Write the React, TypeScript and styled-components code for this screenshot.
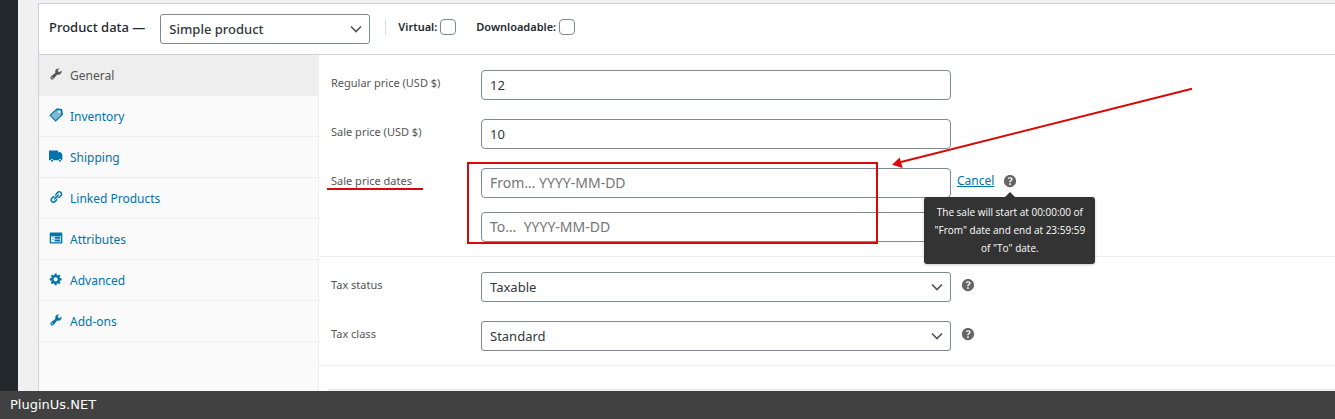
import React from 'react';
import styled, { createGlobalStyle } from 'styled-components';

const Global = createGlobalStyle`
  *, *::before, *::after { box-sizing: border-box; }
  html, body, #root { height: 100%; }
  body { margin: 0; overflow: hidden; background: #f0f0f1; font-family: 'Noto Sans', 'Open Sans', sans-serif; color: #23282d; }
  input, select, button { font-family: inherit; }
`;

const Page = styled.div`
  display: flex;
  flex-direction: column;
  height: 100vh;
`;

const Workspace = styled.div`
  flex: 1;
  min-height: 0;
  display: flex;
  overflow: hidden;
`;

const AdminMenu = styled.aside`
  flex: 0 0 18px;
  background: #23282d;
`;

const Main = styled.main`
  flex: 1;
  min-width: 0;
  display: flex;
  padding: 3px 0 0 20px;
`;

const MetaBox = styled.section`
  position: relative;
  flex: 1;
  min-width: 0;
  display: flex;
  flex-direction: column;
  background: #fff;
  border: solid #ccd0d4;
  border-width: 1px 0 0 1px;
`;

const Header = styled.header`
  display: flex;
  align-items: flex-start;
  padding: 10px;
  border-bottom: 1px solid #ccd0d4;
`;

const Title = styled.h2`
  margin: 0 15px 0 0;
  font-size: 13px;
  line-height: 26px;
  font-weight: 500;
  white-space: nowrap;
`;

const SelectWrap = styled.div<{ $width: number }>`
  position: relative;
  width: ${(p) => p.$width}px;
  flex: none;

  svg {
    position: absolute;
    right: 8px;
    top: 9px;
    pointer-events: none;
  }
`;

const Select = styled.select<{ $strong?: boolean }>`
  appearance: none;
  display: block;
  width: 100%;
  height: 30px;
  padding: 0 24px 0 8px;
  border: 1px solid #7e8993;
  border-radius: 3px;
  background: #fff;
  color: #32373c;
  font-size: 13px;
  font-weight: ${(p) => (p.$strong ? 500 : 400)};
`;

const Divider = styled.span`
  width: 1px;
  height: 16px;
  margin: 5px 12px 0 15px;
  background: #dcdcde;
`;

const CheckLabel = styled.label`
  display: flex;
  align-items: center;
  gap: 3px;
  margin-right: 20px;
  font-size: 11px;
  line-height: 26px;
  font-weight: 600;
`;

const Checkbox = styled.input`
  appearance: none;
  width: 16px;
  height: 16px;
  margin: 0;
  border: 1px solid #7e8993;
  border-radius: 4px;
  background: #fff;
`;

const Body = styled.div`
  flex: 1;
  min-height: 0;
  display: flex;
`;

const Tabs = styled.nav`
  flex: 0 0 280px;
  border-right: 1px solid #eee;
  background: #fafafa;
`;

const Tab = styled.a<{ $active?: boolean }>`
  display: flex;
  gap: 7px;
  height: 41px;
  padding: 11px 10px 0;
  border-bottom: 1px solid #eee;
  background: ${(p) => (p.$active ? '#eee' : 'transparent')};
  color: ${(p) => (p.$active ? '#555' : '#0073aa')};
  font-size: 12px;
  line-height: 20px;
  text-decoration: none;

  svg { margin-top: 1px; }
`;

const Panel = styled.div`
  flex: 1;
  min-width: 0;
`;

const Group = styled.div`
  display: flex;
  flex-direction: column;
  gap: 19px;
  padding: 15px 12px 14px;
  border-bottom: 1px solid #eee;
`;

const Field = styled.div`
  display: flex;
  align-items: flex-start;
`;

const Label = styled.label`
  flex: 0 0 150px;
  color: #555;
  font-size: 11px;
  line-height: 26px;
`;

const Marked = styled.span`
  position: relative;

  &::after {
    content: '';
    position: absolute;
    left: -4px;
    right: -11px;
    bottom: -2px;
    height: 2px;
    background: #d80808;
  }
`;

const Input = styled.input`
  display: block;
  width: 470px;
  height: 30px;
  padding: 0 8px;
  border: 1px solid #7e8993;
  border-radius: 4px;
  background: #fff;
  color: #32373c;
  font-size: 13px;

  &::placeholder { color: #757575; opacity: 1; font-size: 14px; }
`;

const DateFields = styled.div`
  position: relative;
  display: flex;
  flex-direction: column;
  gap: 14px;
`;

const Frame = styled.div`
  position: absolute;
  left: -14px;
  top: -6px;
  width: 411px;
  height: 82px;
  border: 2px solid #d80808;
  pointer-events: none;
`;

const CancelLink = styled.a`
  margin-left: 6px;
  color: #0073aa;
  font-size: 12px;
  line-height: 26px;
`;

const Help = styled.span<{ $gap: number }>`
  position: relative;
  display: flex;
  margin: 6px 0 0 ${(p) => p.$gap}px;
  color: #666;
`;

const Tooltip = styled.div`
  position: absolute;
  top: 23px;
  left: 50%;
  width: 171px;
  margin-left: -86px;
  padding: 6px 8px 7px;
  border-radius: 3px;
  background: #333;
  color: #fff;
  box-shadow: 0 1px 3px rgba(0, 0, 0, 0.2);
  font-family: 'Open Sans', sans-serif;
  font-size: 10px;
  line-height: 18px;
  font-weight: 500;
  text-align: center;

  &::before {
    content: '';
    position: absolute;
    left: 50%;
    top: -5px;
    margin-left: -5px;
    border: solid transparent;
    border-width: 0 5px 5px;
    border-bottom-color: #333;
  }
`;

const Arrow = styled.svg`
  position: absolute;
  left: 852px;
  top: 80px;
  pointer-events: none;
`;

const NextBlock = styled.div`
  height: 10px;
  margin: 23px 0 0 9px;
  background: #eee;
`;

const Footer = styled.footer`
  flex: 0 0 28px;
  padding-left: 10px;
  background: #414141;
  color: #fff;
  font-family: 'DejaVu Sans', sans-serif;
  font-size: 13px;
  line-height: 28px;
`;

const WRENCH =
  'M16.68 9.77c-1.34 1.34-3.3 1.67-4.95.99l-5.41 6.52c-.99.99-2.59.99-3.58 0s-.99-2.59 0-3.57l6.52-5.42c-.68-1.65-.35-3.61.99-4.95 1.28-1.28 3.12-1.62 4.72-1.06l-2.89 2.89 2.82 2.82 2.86-2.87c.53 1.58.18 3.39-1.08 4.65zM3.81 16.21c.4.39 1.04.39 1.43 0 .4-.4.4-1.04 0-1.43-.39-.4-1.03-.4-1.43 0-.39.39-.39 1.03 0 1.43z';
const TRUCK =
  'M0 2h13v2.500h4l2 3.500v8h-1.200a2.200 2.200 0 0 0-4.200 0H6.400a2.200 2.200 0 0 0-4.200 0H0zM4.300 15.300a1.500 1.500 0 1 1 0 3 1.500 1.500 0 0 1 0-3zM15.700 15.300a1.500 1.500 0 1 1 0 3 1.500 1.500 0 0 1 0-3z';
const LINK =
  'M17.74 2.76c1.68 1.69 1.68 4.41 0 6.1l-1.53 1.52c-1.12 1.12-2.7 1.47-4.14 1.09l2.62-2.61.76-.77.76-.76c.84-.84.84-2.2 0-3.04-.84-.85-2.2-.85-3.04 0l-.77.76-3.38 3.38c-.37-1.44-.02-3.02 1.1-4.14l1.52-1.53c1.69-1.68 4.42-1.68 6.1 0zM8.59 13.43l5.34-5.34c.42-.42.42-1.1 0-1.52-.44-.43-1.13-.39-1.53 0l-5.33 5.34c-.42.42-.42 1.1 0 1.52.44.43 1.13.39 1.52 0zm-.76 2.29l4.14-4.15c.38 1.44.03 3.02-1.09 4.14l-1.52 1.53c-1.69 1.68-4.41 1.68-6.1 0-1.68-1.68-1.68-4.42 0-6.1l1.53-1.52c1.12-1.12 2.7-1.47 4.14-1.1l-4.14 4.15c-.85.84-.85 2.2 0 3.05.84.84 2.2.84 3.04 0z';
const FEEDBACK =
  'M2 2h16c.55 0 1 .45 1 1v14c0 .55-.45 1-1 1H2c-.55 0-1-.45-1-1V3c0-.55.45-1 1-1zm15 14V7H3v9h14zM4 8v1h3V8H4zm4 0v3h8V8H8zm-4 4v1h3v-1H4zm4 0v3h8v-3H8z';
const GEAR =
  'M18 12h-2.18c-.17.7-.44 1.35-.81 1.93l1.54 1.54-2.1 2.1-1.54-1.54c-.58.36-1.23.63-1.91.79V19H8v-2.18c-.68-.16-1.33-.43-1.91-.79l-1.54 1.54-2.12-2.12 1.54-1.54c-.36-.58-.63-1.23-.79-1.91H1V9.03h2.17c.16-.7.44-1.35.8-1.94L2.43 5.55l2.1-2.1 1.54 1.54c.58-.37 1.24-.64 1.93-.81V2h3v2.18c.68.16 1.33.43 1.91.79l1.54-1.54 2.12 2.12-1.54 1.54c.36.59.64 1.24.8 1.94H18V12zm-8.5 1.5c1.66 0 3-1.34 3-3s-1.34-3-3-3-3 1.34-3 3 1.34 3 3 3z';
const QUESTION =
  'M17 10c0-3.87-3.14-7-7-7-3.87 0-7 3.13-7 7s3.13 7 7 7c3.86 0 7-3.13 7-7zm-6.3 1.48H9.14v-.43c0-.38.08-.7.24-.98s.46-.57.88-.89c.41-.29.68-.53.81-.71.14-.18.2-.39.2-.62 0-.25-.09-.44-.28-.58-.19-.13-.45-.19-.79-.19-.58 0-1.25.19-2 .57l-.64-1.28c.87-.49 1.8-.74 2.77-.74.81 0 1.45.2 1.92.58.48.39.71.91.71 1.55 0 .43-.09.8-.29 1.11-.19.32-.57.67-1.11 1.06-.38.28-.61.49-.71.63-.1.15-.15.34-.15.57v.35zm-1.47 2.74c-.18-.17-.27-.42-.27-.73 0-.33.08-.58.26-.75s.43-.25.77-.25c.32 0 .57.09.75.26s.27.42.27.74c0 .3-.09.55-.27.72-.18.18-.43.27-.75.27-.33 0-.58-.09-.76-.26z';

const Glyph = ({ d }: { d: string }) => (
  <svg width="14" height="14" viewBox="0 0 20 20" fill="currentColor" aria-hidden="true">
    <path d={d} />
  </svg>
);

const TagGlyph = () => (
  <svg width="14" height="14" viewBox="0 0 20 20" aria-hidden="true">
    <path d="M11 1.500 17.500 3 18.500 10 9.500 18.500 1.500 10.500Z" fill="#0073aa" fillOpacity=".5" stroke="#0073aa" strokeWidth="1.500" />
    <path d="M10 3.500 12 1.500l6 .5 1 7-2 2" fill="none" stroke="#0073aa" strokeWidth="1.500" />
    <circle cx="14.500" cy="5.500" r="1.700" fill="#fafafa" />
  </svg>
);

const Chevron = () => (
  <svg width="12" height="12" viewBox="0 0 12 12" fill="none" stroke="#555" strokeWidth="1.700" aria-hidden="true">
    <path d="M1 3.500 6 8.500 11 3.500" />
  </svg>
);

const HelpTip = ({ gap, children }: { gap: number; children?: React.ReactNode }) => (
  <Help $gap={gap}>
    <svg width="14" height="14" viewBox="2 2 16 16" fill="currentColor" role="img" aria-label="Help">
      <path d={QUESTION} />
    </svg>
    {children}
  </Help>
);

const tabs = [
  { name: 'General', icon: <Glyph d={WRENCH} />, active: true },
  { name: 'Inventory', icon: <TagGlyph /> },
  { name: 'Shipping', icon: <Glyph d={TRUCK} /> },
  { name: 'Linked Products', icon: <Glyph d={LINK} /> },
  { name: 'Attributes', icon: <Glyph d={FEEDBACK} /> },
  { name: 'Advanced', icon: <Glyph d={GEAR} /> },
  { name: 'Add-ons', icon: <Glyph d={WRENCH} /> },
];

export default function App() {
  return (
    <Page>
      <Global />
      <Workspace>
        <AdminMenu />
        <Main>
          <MetaBox>
            <Header>
              <Title>Product data —</Title>
              <SelectWrap $width={210}>
                <Select $strong aria-label="Product type">
                  <option>Simple product</option>
                </Select>
                <Chevron />
              </SelectWrap>
              <Divider />
              <CheckLabel>
                Virtual: <Checkbox type="checkbox" />
              </CheckLabel>
              <CheckLabel>
                Downloadable: <Checkbox type="checkbox" />
              </CheckLabel>
            </Header>
            <Body>
              <Tabs>
                {tabs.map((t) => (
                  <Tab key={t.name} href="#" $active={t.active}>
                    {t.icon}
                    {t.name}
                  </Tab>
                ))}
              </Tabs>
              <Panel>
                <Group>
                  <Field>
                    <Label htmlFor="regular">Regular price (USD $)</Label>
                    <Input id="regular" defaultValue="12" />
                  </Field>
                  <Field>
                    <Label htmlFor="sale">Sale price (USD $)</Label>
                    <Input id="sale" defaultValue="10" />
                  </Field>
                  <Field>
                    <Label htmlFor="from">
                      <Marked>Sale price dates</Marked>
                    </Label>
                    <DateFields>
                      <Input id="from" placeholder="From… YYYY-MM-DD" />
                      <Input aria-label="Sale end date" placeholder="To…&nbsp; YYYY-MM-DD" />
                      <Frame />
                    </DateFields>
                    <CancelLink href="#">Cancel</CancelLink>
                    <HelpTip gap={9}>
                      <Tooltip role="tooltip">
                        The sale will start at 00:00:00 of "From" date and end at 23:59:59 of "To" date.
                      </Tooltip>
                    </HelpTip>
                  </Field>
                </Group>
                <Group>
                  <Field>
                    <Label htmlFor="status">Tax status</Label>
                    <SelectWrap $width={470}>
                      <Select id="status">
                        <option>Taxable</option>
                      </Select>
                      <Chevron />
                    </SelectWrap>
                    <HelpTip gap={10} />
                  </Field>
                  <Field>
                    <Label htmlFor="class">Tax class</Label>
                    <SelectWrap $width={470}>
                      <Select id="class">
                        <option>Standard</option>
                      </Select>
                      <Chevron />
                    </SelectWrap>
                    <HelpTip gap={10} />
                  </Field>
                </Group>
                <NextBlock />
              </Panel>
            </Body>
            <Arrow width="304" height="90" viewBox="0 0 304 90" aria-hidden="true">
              <path d="M301 4.700 10 78" stroke="#d80808" strokeWidth="2" />
              <path d="M1 80.700 8.700 73.500 11.700 84Z" fill="#d80808" />
            </Arrow>
          </MetaBox>
        </Main>
      </Workspace>
      <Footer>PluginUs.NET</Footer>
    </Page>
  );
}
